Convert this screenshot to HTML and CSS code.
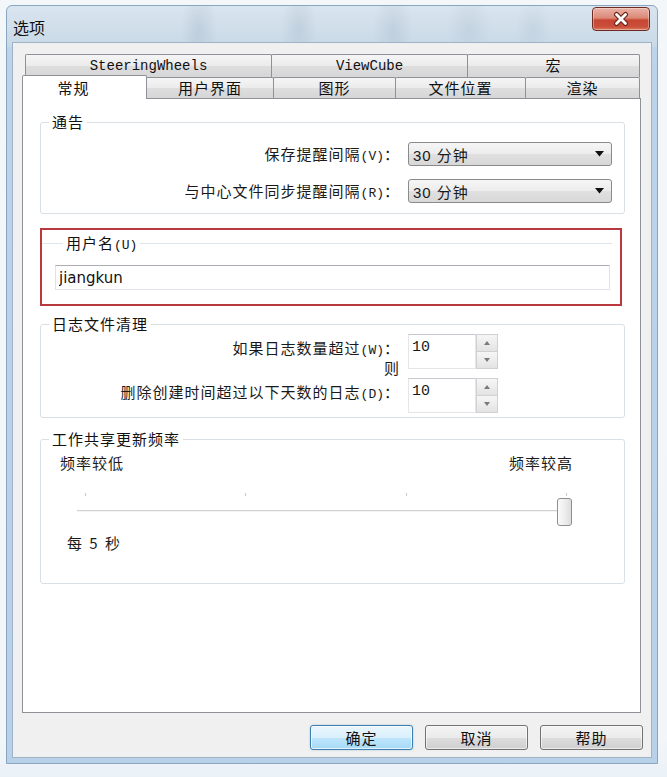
FILE: index.html
```html
<!DOCTYPE html>
<html lang="zh-CN">
<head>
    <meta charset="UTF-8">
    <meta name="viewport" content="width=device-width, initial-scale=1.0">
    <title>选项</title>
    <link rel="stylesheet" href="styles.css">
</head>
<body>
    <div class="window">
        <div class="titlebar">
            <span class="title">选项</span>
            <button class="close-btn" aria-label="关闭">
                <svg width="18" height="16" viewBox="0 0 18 16">
                    <path d="M4.5 3.5 L13.5 12.5 M13.5 3.5 L4.5 12.5" stroke="#6b2419" stroke-width="5" stroke-linecap="round"/>
                    <path d="M4.5 3.5 L13.5 12.5 M13.5 3.5 L4.5 12.5" stroke="#ffffff" stroke-width="2.8" stroke-linecap="round"/>
                </svg>
            </button>
        </div>

        <div class="client">
            <div class="tab-control">
                <div class="tab-row tab-row-back">
                    <div class="tab tab-steering mono">SteeringWheels</div>
                    <div class="tab tab-viewcube mono">ViewCube</div>
                    <div class="tab tab-macro">宏</div>
                </div>
                <div class="tab-row tab-row-front">
                    <div class="tab tab-general active">常规</div>
                    <div class="tab tab-ui">用户界面</div>
                    <div class="tab tab-graphics">图形</div>
                    <div class="tab tab-files">文件位置</div>
                    <div class="tab tab-render">渲染</div>
                </div>

                <div class="tab-panel">
                    <fieldset class="group group-notice">
                        <legend>通告</legend>
                        <div class="field-row">
                            <label class="field-label">保存提醒间隔<span class="key">(V)</span>：</label>
                            <div class="select">
                                <span>30 分钟</span>
                                <svg class="select-arrow" width="9" height="6" viewBox="0 0 9 6"><path d="M0 0 H9 L4.5 5.5 Z" fill="#111"/></svg>
                            </div>
                        </div>
                        <div class="field-row">
                            <label class="field-label">与中心文件同步提醒间隔<span class="key">(R)</span>：</label>
                            <div class="select">
                                <span>30 分钟</span>
                                <svg class="select-arrow" width="9" height="6" viewBox="0 0 9 6"><path d="M0 0 H9 L4.5 5.5 Z" fill="#111"/></svg>
                            </div>
                        </div>
                    </fieldset>

                    <div class="highlight">
                        <fieldset class="group group-user">
                            <legend>用户名<span class="key">(U)</span></legend>
                            <input type="text" class="text-input" value="jiangkun">
                        </fieldset>
                    </div>

                    <fieldset class="group group-log">
                        <legend>日志文件清理</legend>
                        <div class="spin-row">
                            <label class="field-label">如果日志数量超过<span class="key">(W)</span>：<br>则</label>
                            <div class="spin">
                                <div class="spin-input">10</div>
                                <div class="spin-buttons">
                                    <div class="spin-btn"><svg width="6" height="4" viewBox="0 0 6 4"><path d="M0 4 L3 0 L6 4 Z" fill="#7a7a7a"/></svg></div>
                                    <div class="spin-btn"><svg width="6" height="4" viewBox="0 0 6 4"><path d="M0 0 H6 L3 4 Z" fill="#7a7a7a"/></svg></div>
                                </div>
                            </div>
                        </div>
                        <div class="spin-row">
                            <label class="field-label">删除创建时间超过以下天数的日志<span class="key">(D)</span>：</label>
                            <div class="spin">
                                <div class="spin-input">10</div>
                                <div class="spin-buttons">
                                    <div class="spin-btn"><svg width="6" height="4" viewBox="0 0 6 4"><path d="M0 4 L3 0 L6 4 Z" fill="#7a7a7a"/></svg></div>
                                    <div class="spin-btn"><svg width="6" height="4" viewBox="0 0 6 4"><path d="M0 0 H6 L3 4 Z" fill="#7a7a7a"/></svg></div>
                                </div>
                            </div>
                        </div>
                    </fieldset>

                    <fieldset class="group group-freq">
                        <legend>工作共享更新频率</legend>
                        <div class="freq-labels">
                            <span>频率较低</span>
                            <span>频率较高</span>
                        </div>
                        <div class="slider">
                            <div class="ticks">
                                <span class="tick"></span>
                                <span class="tick"></span>
                                <span class="tick"></span>
                                <span class="tick"></span>
                            </div>
                            <div class="track"></div>
                            <div class="thumb"></div>
                        </div>
                        <div class="freq-value">每 5 秒</div>
                    </fieldset>
                </div>
            </div>

            <div class="dialog-buttons">
                <button class="btn btn-default">确定</button>
                <button class="btn">取消</button>
                <button class="btn">帮助</button>
            </div>
        </div>
    </div>
</body>
</html>
```

FILE: styles.css
```css
* {
    margin: 0;
    padding: 0;
    box-sizing: border-box;
}

body {
    font-family: "Noto Sans CJK SC", "Liberation Sans", sans-serif;
    font-size: 15px;
    color: #1a1a1a;
    background: linear-gradient(180deg, #f4f7fa 0%, #f2f6f9 95%, #eaf1f7 100%);
    height: 777px;
    overflow: hidden;
}

/* window frame */

.window {
    width: 652px;
    height: 759px;
    margin: 5px 0 0 6px;
    padding: 0 5px 5px;
    border: 1px solid #88a5c2;
    border-radius: 6px 6px 0 0;
    display: flex;
    flex-direction: column;
    background:
        radial-gradient(ellipse 18px 40px at 192px 24px, rgba(130, 150, 170, 0.22), transparent),
        radial-gradient(ellipse 18px 40px at 292px 22px, rgba(130, 150, 170, 0.2), transparent),
        radial-gradient(ellipse 20px 40px at 386px 24px, rgba(130, 150, 170, 0.2), transparent),
        radial-gradient(ellipse 22px 36px at 462px 22px, rgba(140, 160, 180, 0.18), transparent),
        radial-gradient(ellipse 18px 32px at 526px 24px, rgba(140, 160, 180, 0.16), transparent),
        linear-gradient(180deg, #d9e5ef 0%, #c9d9e7 40px, #bcd3ea 42px, #b8d0e8 100%);
}

.titlebar {
    height: 36px;
    display: flex;
    justify-content: space-between;
    align-items: flex-start;
}

.title {
    font-size: 16px;
    line-height: 20px;
    padding: 11px 0 0 1px;
    color: #111;
}

.close-btn {
    width: 58px;
    height: 24px;
    margin: 1px 2px 0 0;
    border: 1px solid #6e2b22;
    border-radius: 4px;
    background: linear-gradient(180deg, #eab2a6 0%, #dc8a78 45%, #c84532 55%, #c9503b 85%, #dc7a60 100%);
    display: flex;
    align-items: center;
    justify-content: center;
    box-shadow: inset 0 0 0 1px rgba(255, 255, 255, 0.35);
}

.client {
    height: 716px;
    border: 1px solid #9fb3c7;
    background: #f0f0f0;
    padding: 11px 10px 0 9px;
}

/* tabs */

.tab-control {
    width: 619px;
}

.tab-row {
    display: flex;
}

.tab-row-back {
    height: 23px;
    margin-left: 3px;
}

.tab-row-front {
    height: 21px;
    align-items: flex-end;
}

.tab {
    height: 100%;
    border: 1px solid #8e9196;
    border-bottom: none;
    border-radius: 2px 2px 0 0;
    background: linear-gradient(180deg, #f5f5f5 0%, #ebebeb 50%, #dedede 51%, #d6d6d6 100%);
    text-align: center;
    font-size: 15px;
    letter-spacing: 1px;
    line-height: 20px;
    color: #111;
}

.tab + .tab {
    margin-left: -1px;
}

.tab.mono {
    font-family: "Liberation Mono", monospace;
    font-size: 14px;
    letter-spacing: 0;
    line-height: 23px;
}

.tab-steering { width: 247px; }
.tab-viewcube { width: 197px; }
.tab-macro { width: 173px; }

.tab-general { width: 125px; }
.tab-ui { width: 128px; }
.tab-graphics { width: 123px; }
.tab-files { width: 131px; }
.tab-render { width: 115px; }

.tab-row-front .tab {
    height: 21px;
}

.tab.active {
    height: 24px;
    margin-bottom: -1px;
    padding-right: 22px;
    background: #ffffff;
    position: relative;
    z-index: 2;
    line-height: 23px;
}

.tab-panel {
    height: 615px;
    border: 1px solid #8e9196;
    background: #ffffff;
    padding: 13px 15px 0 17px;
}

/* group boxes */

.group {
    border: 1px solid #d8e0e6;
    border-radius: 3px;
    min-width: 0;
}

.group legend {
    margin-left: 8px;
    padding: 0 3px;
    line-height: 20px;
    font-size: 15px;
    letter-spacing: 1px;
    color: #111;
}

.key {
    font-family: "Liberation Mono", monospace;
    font-size: 13px;
    line-height: 1;
    letter-spacing: 0;
}

.group-notice {
    padding: 10px 12px 10px 0;
}

.field-row {
    display: flex;
    align-items: center;
    gap: 8px;
}

.field-row + .field-row {
    margin-top: 13px;
}

.field-label {
    width: 359px;
    text-align: right;
    letter-spacing: 1px;
    line-height: 20px;
    flex-shrink: 0;
}

.select {
    width: 204px;
    height: 24px;
    border: 1px solid #8a8a8a;
    border-radius: 3px;
    background: linear-gradient(180deg, #f6f6f6 0%, #ececec 50%, #e0e0e0 51%, #d8d8d8 100%);
    display: flex;
    align-items: center;
    justify-content: space-between;
    padding: 0 7px 0 4px;
    font-family: "Liberation Sans", "Noto Sans CJK SC", sans-serif;
    font-size: 15px;
    letter-spacing: 1px;
}

/* highlighted user name box */

.highlight {
    margin: 14px 3px 0 0;
    border: 2px solid #b9393e;
    padding: 3px 0 14px;
}

.group-user {
    border: none;
    border-top: 1px solid #dfe6eb;
    border-radius: 0;
    margin-right: 8px;
    padding: 12px 2px 0 13px;
}

.text-input {
    display: block;
    width: 100%;
    height: 25px;
    border: 1px solid #dfe3e8;
    border-top-color: #abadb3;
    padding: 0 3px;
    font-family: "DejaVu Sans", sans-serif;
    font-size: 15px;
    color: #111;
    background: #fff;
    outline: none;
}

/* log cleanup */

.group-log {
    margin-top: 8px;
    padding: 0 0 4px;
}

.spin-row {
    display: flex;
    align-items: flex-start;
    gap: 8px;
}

.spin-row .field-label {
    padding-top: 4px;
}

.spin {
    width: 90px;
    height: 35px;
    display: flex;
}

.spin-input {
    flex: 1;
    border: 1px solid #e4e6ea;
    border-top-color: #c5c8cc;
    padding: 3px 3px;
    font-family: "Liberation Mono", monospace;
    font-size: 15px;
    line-height: 20px;
}

.spin-buttons {
    width: 22px;
    display: flex;
    flex-direction: column;
}

.spin-btn {
    flex: 1;
    border: 1px solid #cfd1d4;
    background: linear-gradient(180deg, #f6f6f6, #e3e3e3);
    display: flex;
    align-items: center;
    justify-content: center;
}

.spin-btn + .spin-btn {
    border-top: none;
}

/* worksharing frequency */

.group-freq {
    margin-top: 11px;
    padding: 4px 0 30px;
}

.freq-labels {
    display: flex;
    justify-content: space-between;
    padding: 0 51px 0 19px;
    line-height: 20px;
    letter-spacing: 1px;
}

.slider {
    position: relative;
    height: 33px;
    margin: 20px 52px 0 36px;
}

.ticks {
    display: flex;
    justify-content: space-between;
    padding: 0 5px 0 8px;
    height: 4px;
}

.tick {
    width: 1px;
    height: 3px;
    background: #c8c8c8;
}

.track {
    margin: 13px 7px 0 0;
    height: 2px;
    background: #cfcfcf;
    border-bottom: 1px solid #f4f4f4;
}

.thumb {
    position: absolute;
    right: 0;
    top: 5px;
    width: 15px;
    height: 28px;
    border: 1px solid #8e8f8f;
    border-radius: 3px;
    background: linear-gradient(90deg, #fbfbfb 0%, #eeeeee 50%, #dddddd 100%);
}

.freq-value {
    margin-top: 7px;
    padding-left: 26px;
    line-height: 20px;
    letter-spacing: 2px;
}

/* dialog buttons */

.dialog-buttons {
    display: flex;
    justify-content: flex-end;
    gap: 12px;
    margin: 12px -2px 0 0;
}

.btn {
    width: 103px;
    height: 25px;
    border: 1px solid #707070;
    border-radius: 3px;
    background: linear-gradient(180deg, #f3f3f3 0%, #ebebeb 50%, #dddddd 51%, #cfcfcf 100%);
    font-family: "Noto Sans CJK SC", sans-serif;
    font-size: 15px;
    letter-spacing: 1px;
    color: #111;
    box-shadow: inset 0 0 0 1px rgba(255, 255, 255, 0.6);
}

.btn-default {
    border-color: #3c7fb1;
    background: linear-gradient(180deg, #eaf6fd 0%, #d9f0fc 50%, #bee6fd 51%, #a7d9f5 100%);
    box-shadow: inset 0 0 0 1px rgba(255, 255, 255, 0.7), 0 0 2px rgba(60, 127, 177, 0.4);
}
```
